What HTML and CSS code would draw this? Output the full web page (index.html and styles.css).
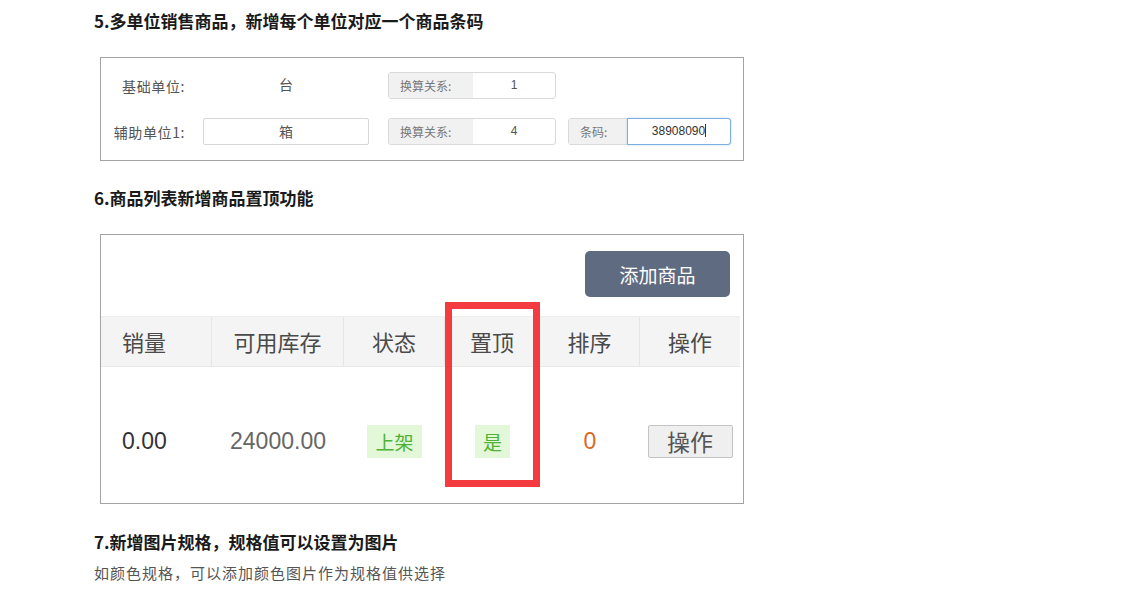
FILE: index.html
```html
<!DOCTYPE html>
<html lang="zh-CN">
<head>
  <meta charset="UTF-8">
  <title>更新说明</title>
  <link rel="stylesheet" href="styles.css">
</head>
<body>
  <div class="page">
    <h2 class="title">5.多单位销售商品，新增每个单位对应一个商品条码</h2>

    <!-- 多单位设置 -->
    <div class="unit-box">
      <div class="unit-row">
        <div class="unit-label">基础单位:</div>
        <div class="unit-value">台</div>
        <div class="group group-rate">
          <span class="addon">换算关系:</span>
          <span class="field">1</span>
        </div>
      </div>
      <div class="unit-row">
        <div class="unit-label">辅助单位1:</div>
        <div class="unit-input">箱</div>
        <div class="group group-rate">
          <span class="addon">换算关系:</span>
          <span class="field">4</span>
        </div>
        <div class="group group-code">
          <span class="addon addon-code">条码:</span>
          <span class="field field-focus">38908090<i class="caret"></i></span>
        </div>
      </div>
    </div>

    <h2 class="title title-gap">6.商品列表新增商品置顶功能</h2>

    <!-- 商品列表 -->
    <div class="list-box">
      <div class="toolbar">
        <button class="add-btn">添加商品</button>
      </div>
      <div class="grid grid-head">
        <div class="cell first">销量</div>
        <div class="cell">可用库存</div>
        <div class="cell">状态</div>
        <div class="cell">置顶</div>
        <div class="cell">排序</div>
        <div class="cell">操作</div>
      </div>
      <div class="grid grid-body">
        <div class="cell first num-dark">0.00</div>
        <div class="cell num-grey">24000.00</div>
        <div class="cell"><span class="tag">上架</span></div>
        <div class="cell"><span class="tag">是</span></div>
        <div class="cell num-orange">0</div>
        <div class="cell"><button class="op-btn">操作</button></div>
      </div>
      <div class="highlight"></div>
    </div>

    <h2 class="title title-gap3">7.新增图片规格，规格值可以设置为图片</h2>
    <p class="desc">如颜色规格，可以添加颜色图片作为规格值供选择</p>
  </div>
</body>
</html>
```

FILE: styles.css
```css
body {
  margin: 0;
  background-color: #fff;
  font-family: "Noto Sans CJK SC", "Noto Sans", sans-serif;
  color: #333;
}

.page {
  padding: 9px 0 0 94px;
}

.title {
  margin: 0;
  font-size: 17px;
  line-height: 24px;
  font-weight: bold;
  color: #1a1a1a;
}

.title-gap {
  margin-top: 25px;
}

.title-gap3 {
  margin-top: 26px;
}

.desc {
  margin: 8px 0 0;
  font-size: 15px;
  line-height: 22px;
  letter-spacing: 1px;
  color: #555;
}

/* unit box */
.unit-box {
  width: 642px;
  margin: 24px 0 0 6px;
  border: 1px solid #a3a3a3;
  padding: 14px 0 15px;
}

.unit-row {
  display: flex;
  align-items: center;
  height: 27px;
}

.unit-row + .unit-row {
  margin-top: 19px;
}

.unit-label {
  width: 84px;
  text-align: right;
  font-size: 14px;
  letter-spacing: 0.6px;
  color: #555;
}

.unit-value,
.unit-input {
  width: 166px;
  height: 27px;
  margin-left: 18px;
  box-sizing: border-box;
  text-align: center;
  font-size: 14px;
  line-height: 25px;
  color: #555;
}

.unit-input {
  border: 1px solid #d6d6d6;
  border-radius: 2px;
}

.group {
  display: flex;
  height: 27px;
  box-sizing: border-box;
  border: 1px solid #d9d9d9;
  border-radius: 3px;
  overflow: hidden;
  font-size: 12px;
  line-height: 25px;
}

.group-rate {
  width: 168px;
  margin-left: 19px;
}

.group-code {
  width: 163px;
  margin-left: 12px;
  overflow: visible;
}

.addon {
  width: 84px;
  padding-left: 11px;
  box-sizing: border-box;
  background-color: #f1f1f1;
  color: #777;
}

.addon-code {
  width: 58px;
}

.field {
  flex: 1;
  text-align: center;
  font-family: "Liberation Sans", Arial, sans-serif;
  color: #555;
}

.field-focus {
  margin: -1px -1px -1px 0;
  border: 1px solid #7eaedf;
  border-radius: 0 3px 3px 0;
  box-shadow: 0 0 2px rgba(102, 160, 220, 0.5);
  color: #333;
}

.caret {
  display: inline-block;
  width: 1px;
  height: 13px;
  background-color: #333;
  vertical-align: -2px;
}

/* list box */
.list-box {
  position: relative;
  width: 642px;
  margin: 24px 0 0 6px;
  border: 1px solid #a3a3a3;
  padding-top: 16px;
}

.toolbar {
  display: flex;
  justify-content: flex-end;
  padding-right: 13px;
}

.add-btn {
  width: 145px;
  height: 46px;
  border: none;
  border-radius: 5px;
  background-color: #5f6b80;
  color: #fff;
  font-family: "Noto Sans CJK SC", sans-serif;
  font-size: 19px;
}

.grid {
  display: grid;
  grid-template-columns: 111px 132px 101px 95px 100px 100px;
  width: 639px;
}

.grid-head {
  margin-top: 19px;
  background-color: #f4f4f4;
  border-top: 1px solid #efefef;
  border-bottom: 1px solid #e8e8e8;
}

.grid-head .cell {
  height: 49px;
  line-height: 49px;
  font-size: 22px;
  color: #4a4a4a;
  border-right: 1px solid #e6e6e6;
}

.grid-head .cell:last-child {
  border-right: none;
}

.cell {
  text-align: center;
}

.grid-body .cell {
  padding: 58px 0 46px;
  height: 32px;
  line-height: 32px;
  font-family: "Liberation Sans", "Noto Sans CJK SC", sans-serif;
  font-size: 23px;
}

.grid .cell.first {
  text-align: left;
  padding-left: 21px;
}

.num-dark {
  color: #333;
}

.num-grey {
  color: #666;
}

.num-orange {
  color: #d96a1d;
}

.tag {
  display: inline-block;
  padding: 0 8px;
  height: 33px;
  line-height: 33px;
  background-color: #e3f8d8;
  color: #4fb236;
  font-family: "Noto Sans CJK SC", sans-serif;
  font-size: 19px;
}

.op-btn {
  width: 85px;
  height: 33px;
  border: 1px solid #c4c4c4;
  border-radius: 2px;
  background-color: #efefef;
  color: #555;
  font-family: "Noto Sans CJK SC", sans-serif;
  font-size: 23px;
  line-height: 29px;
  padding: 0;
}

.highlight {
  position: absolute;
  left: 344px;
  top: 67px;
  width: 95px;
  height: 185px;
  box-sizing: border-box;
  border: 7px solid #f43c40;
}
```
